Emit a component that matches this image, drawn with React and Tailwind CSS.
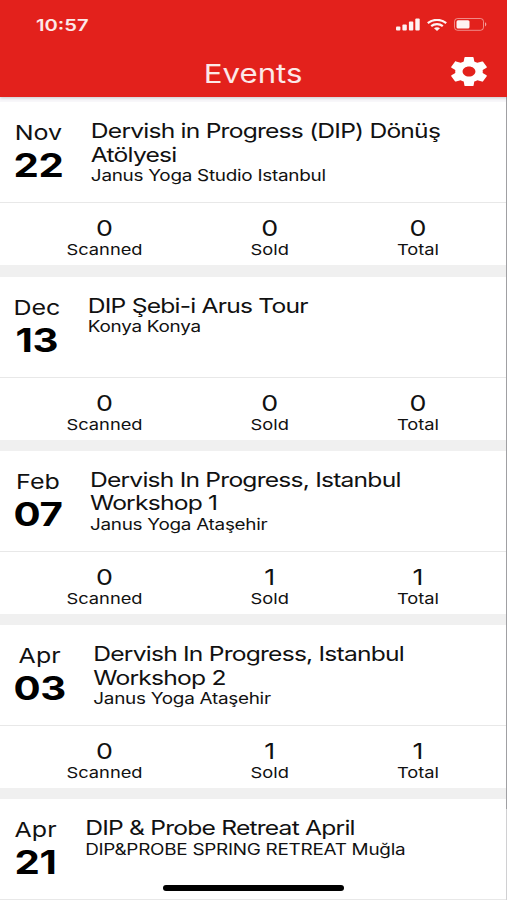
import { clsx } from "clsx";

const EVENTS = [
  { id: 1, month: "Nov", day: "22", title: ["Dervish in Progress (DIP) Dönüş", "Atölyesi"], venue: "Janus Yoga Studio Istanbul", stats: { scanned: 0, sold: 0, total: 0 } },
  { id: 2, month: "Dec", day: "13", title: ["DIP Şebi-i Arus Tour"], venue: "Konya Konya", stats: { scanned: 0, sold: 0, total: 0 } },
  { id: 3, month: "Feb", day: "07", title: ["Dervish In Progress, Istanbul", "Workshop 1"], venue: "Janus Yoga Ataşehir", stats: { scanned: 0, sold: 1, total: 1 } },
  { id: 4, month: "Apr", day: "03", title: ["Dervish In Progress, Istanbul", "Workshop 2"], venue: "Janus Yoga Ataşehir", stats: { scanned: 0, sold: 1, total: 1 } },
  { id: 5, month: "Apr", day: "21", title: ["DIP & Probe Retreat April"], venue: "DIP&PROBE SPRING RETREAT Muğla" },
];

function SignalIcon() {
  return (
    <svg width="24" height="13" viewBox="0 0 24 13" fill="currentColor">
      <rect x="0" y="8.5" width="4.4" height="4" rx="1" />
      <rect x="6.4" y="6.4" width="4.4" height="6.1" rx="1" />
      <rect x="12.9" y="3.6" width="4.4" height="8.9" rx="1" />
      <rect x="19.3" y="0.5" width="4.4" height="12" rx="1" />
    </svg>
  );
}

function WifiIcon() {
  return (
    <svg width="20" height="12" viewBox="0 0 20 12" fill="none" stroke="currentColor" strokeWidth="2.2">
      <path d="M0.8 4.2C5.8 -0.2 14.2 -0.2 19.2 4.2" />
      <path d="M4.2 7.2C7.5 4.4 12.5 4.4 15.8 7.2" />
      <path d="M7 9.2C8.7 7.9 11.3 7.9 13 9.2L10 11.9Z" fill="currentColor" stroke="none" />
    </svg>
  );
}

function BatteryIcon() {
  return (
    <svg width="33" height="13" viewBox="0 0 33 13" fill="none">
      <rect x="0.5" y="0.5" width="29" height="11.8" rx="3" stroke="currentColor" strokeOpacity="0.5" />
      <rect x="2.5" y="2.2" width="13" height="8.4" rx="1.5" fill="currentColor" />
      <path d="M31 4.2C32.8 4.8 32.8 7.8 31 8.4Z" fill="currentColor" fillOpacity="0.6" />
    </svg>
  );
}

function SettingsIcon() {
  return (
    <svg width="36" height="29" viewBox="2.2 2 19.6 20" preserveAspectRatio="none" fill="currentColor">
      <path d="M19.43 12.98c.04-.32.07-.64.07-.98s-.03-.66-.07-.98l2.11-1.65c.19-.15.24-.42.12-.64l-2-3.46c-.12-.22-.39-.3-.61-.22l-2.49 1c-.52-.4-1.08-.73-1.69-.98l-.38-2.65C14.46 2.18 14.25 2 14 2h-4c-.25 0-.46.18-.49.42l-.38 2.65c-.61.25-1.17.59-1.69.98l-2.49-1c-.23-.09-.49 0-.61.22l-2 3.46c-.13.22-.07.49.12.64l2.11 1.65c-.04.32-.07.65-.07.98s.03.66.07.98l-2.11 1.65c-.19.15-.24.42-.12.64l2 3.46c.12.22.39.3.61.22l2.49-1c.52.4 1.08.73 1.69.98l.38 2.65c.03.24.24.42.49.42h4c.25 0 .46-.18.49-.42l.38-2.65c.61-.25 1.17-.59 1.69-.98l2.49 1c.23.09.49 0 .61-.22l2-3.46c.12-.22.07-.49-.12-.64l-2.11-1.65zM12 15.5c-1.93 0-3.5-1.57-3.5-3.5s1.57-3.5 3.5-3.5 3.5 1.57 3.5 3.5-1.57 3.5-3.5 3.5z" />
    </svg>
  );
}

function Header() {
  return (
    <header className="relative z-10 flex h-[97px] flex-col bg-[#e3211c] text-white shadow-[0_1px_3px_rgba(0,0,0,0.2)]">
      <div className="flex h-[49px] items-center justify-between pl-9 pr-5">
        <span className="origin-left scale-x-[1.26] text-[16px] font-semibold leading-none text-white/90">10:57</span>
        <div className="flex items-center gap-[7px] text-white/95">
          <SignalIcon />
          <WifiIcon />
          <BatteryIcon />
        </div>
      </div>
      <div className="grid h-[47px] grid-cols-[1fr_auto_1fr] items-center">
        <h1 className="col-start-2 mt-0.5 scale-x-[1.2] text-[26px] font-normal leading-none text-white/90">Events</h1>
        <button className="-mt-[3px] mr-5 justify-self-end" aria-label="Settings">
          <SettingsIcon />
        </button>
      </div>
    </header>
  );
}

function Stat({ value, label }) {
  return (
    <div className="flex flex-col items-center">
      <span className="text-[22px] leading-[26px]">{value}</span>
      <span className="text-[15px] leading-[18px]">{label}</span>
    </div>
  );
}

function EventCard({ event }) {
  const { month, day, title, venue, stats } = event;

  return (
    <article className={clsx("bg-white", stats && "mb-[11.25px]")}>
      <div className="flex h-[100px] pl-[11px] pt-[17px]">
        <div className="flex min-w-[36.3px] flex-col items-center">
          <span className="text-[20.5px] leading-[27px]">{month}</span>
          <span className="text-[33px] font-bold leading-[39px] tracking-[-0.3px] text-black">{day}</span>
        </div>
        <div className="pl-[22.5px]">
          <h2 className="text-[20.2px] leading-[23.5px] tracking-[-0.65px]">
            {title.map((line) => (
              <span key={line} className="block whitespace-nowrap">{line}</span>
            ))}
          </h2>
          <p className="whitespace-nowrap text-[15.5px] leading-[19px] tracking-[-0.23px]">{venue}</p>
        </div>
      </div>
      <div className={clsx("border-t border-[#e8e8e8]", stats && "flex h-[63px] justify-around pl-[10.2px] pr-[11.4px] pt-3")}>
        {stats && (
          <>
            <Stat value={stats.scanned} label="Scanned" />
            <Stat value={stats.sold} label="Sold" />
            <Stat value={stats.total} label="Total" />
          </>
        )}
      </div>
    </article>
  );
}

export default function App() {
  return (
    <div className="relative h-[900px] w-[507px] overflow-hidden bg-white font-['Inter',sans-serif] text-[#111]">
      <Header />
      {/* The list is drawn narrow and widened, which gives the extended letterforms */}
      <main className="w-[415.57px] origin-left scale-x-[1.22] bg-[#f0f0f0]">
        <div className="h-[5.25px] bg-[#f8f7fa]" />
        {EVENTS.map((event) => (
          <EventCard key={event.id} event={event} />
        ))}
      </main>
      {/* Scroll indicator and home bar */}
      <div className="absolute right-0 top-[97px] h-[712px] w-px bg-[#a0a0a3]" />
      <div className="absolute bottom-0 right-0 h-[91px] w-px bg-[#d0d0d2]" />
      <div className="absolute bottom-[9px] left-[163px] h-[6px] w-[181px] rounded-full bg-black" />
    </div>
  );
}
